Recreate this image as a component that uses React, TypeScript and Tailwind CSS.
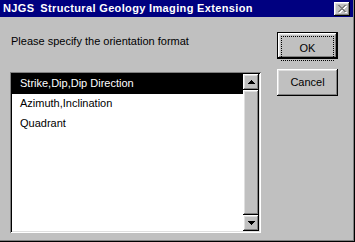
import React, { useState } from 'react';

const raised =
  'shadow-[inset_-1px_-1px_#000,inset_1px_1px_#fff,inset_-2px_-2px_#808080,inset_2px_2px_#dfdfdf]';

const xPixels = [
  '11000011',
  '01100110',
  '00111100',
  '00011000',
  '00111100',
  '01100110',
  '11000011',
];

const CloseGlyph: React.FC = () => (
  <svg width="9" height="8" viewBox="0 0 9 8" shapeRendering="crispEdges">
    {xPixels.map((row, y) =>
      row.split('').map((c, x) =>
        c === '1' ? <rect key={`w${x}-${y}`} x={x + 1} y={y + 1} width="1" height="1" fill="#fff" /> : null
      )
    )}
    {xPixels.map((row, y) =>
      row.split('').map((c, x) =>
        c === '1' ? <rect key={`g${x}-${y}`} x={x} y={y} width="1" height="1" fill="#808080" /> : null
      )
    )}
  </svg>
);

const Arrow: React.FC<{ dir: 'up' | 'down' }> = ({ dir }) => (
  <svg width="7" height="4" viewBox="0 0 7 4" shapeRendering="crispEdges">
    {dir === 'up' ? (
      <path d="M3 0h1v1h1v1h1v1h1v1H0V3h1V2h1V1h1z" fill="#000" />
    ) : (
      <path d="M0 0h7v1H6v1H5v1H4v1H3V3H2V2H1V1H0z" fill="#000" />
    )}
  </svg>
);

const App: React.FC = () => {
  const [selected, setSelected] = useState(0);
  const formats = ['Strike,Dip,Dip Direction', 'Azimuth,Inclination', 'Quadrant'];

  return (
    <div className="w-[355px] h-[242px] overflow-hidden border-r border-b border-black font-['Liberation_Sans',Arial,sans-serif] text-[11px] text-black">
      <div className="h-full border-r border-b border-[#808080] bg-[#c0c0c0] flex flex-col">
        {/* title bar */}
        <div className="h-[17px] bg-[#000080] flex items-center pl-[3px] pr-[3px] text-white font-bold tracking-[0.35px] leading-[17px]">
          <span>NJGS</span>
          <span className="ml-[6px]">Structural Geology Imaging Extension</span>
          <div className={`ml-auto w-[16px] h-[14px] bg-[#c0c0c0] flex items-center justify-center pl-[1px] ${raised}`}>
            <CloseGlyph />
          </div>
        </div>

        {/* body */}
        <div className="flex-1 flex pl-[10px]">
          <div className="flex flex-col pt-[18px]">
            <p className="leading-[13px] pl-[1px]">Please specify the orientation format</p>
            <div className="mt-[24px] w-[251px] h-[161px] p-[2px] bg-white shadow-[inset_1px_1px_#808080,inset_-1px_-1px_#fff,inset_2px_2px_#000,inset_-2px_-2px_#dfdfdf]">
              <div className="h-full flex">
                <ul className="flex-1 bg-white">
                  {formats.map((f, i) => (
                    <li
                      key={f}
                      onClick={() => setSelected(i)}
                      className={`h-[20px] leading-[19px] pl-[8px] cursor-default ${
                        selected === i ? 'bg-black text-white' : ''
                      }`}
                    >
                      {f}
                    </li>
                  ))}
                </ul>
                <div className="w-[16px] flex flex-col bg-[#c0c0c0]">
                  <div className={`h-[16px] flex items-center justify-center ${raised}`}>
                    <Arrow dir="up" />
                  </div>
                  <div className={`flex-1 ${raised}`} />
                  <div className={`h-[16px] flex items-center justify-center ${raised}`}>
                    <Arrow dir="down" />
                  </div>
                </div>
              </div>
            </div>
          </div>

          <div className="ml-[16px] pt-[15px] flex flex-col gap-[10px]">
            <button className="w-[61px] h-[27px] border border-black bg-[#c0c0c0] p-0 shadow-[inset_-1px_-1px_#000,inset_1px_1px_#fff,inset_-2px_-2px_#808080,inset_2px_2px_#dfdfdf]">
              <span className="flex h-full m-[3px] mt-[3px] h-[19px] border border-dotted border-black items-center justify-center leading-none">
                OK
              </span>
            </button>
            <button className={`w-[61px] h-[27px] bg-[#c0c0c0] flex items-center justify-center leading-none ${raised}`}>
              Cancel
            </button>
          </div>
        </div>
      </div>
    </div>
  );
};

export default App;
